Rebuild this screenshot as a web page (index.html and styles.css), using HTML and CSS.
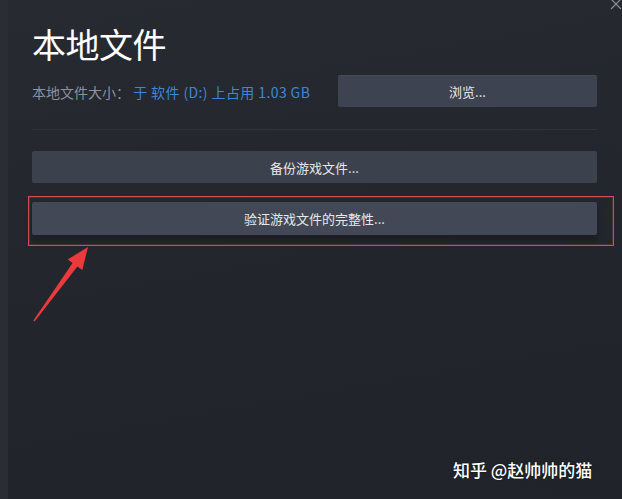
FILE: index.html
```html
<!DOCTYPE html>
<html lang="zh-CN">
<head>
    <meta charset="UTF-8">
    <meta name="viewport" content="width=device-width, initial-scale=1.0">
    <title>本地文件</title>
    <link rel="stylesheet" href="styles.css">
</head>
<body>
    <div class="panel">
        <div class="edge"></div>
        <div class="content">
            <h1 class="title">本地文件</h1>
            <div class="size-row">
                <div class="size-text">
                    <span class="label">本地文件大小：</span>
                    <span class="value">于 软件 (D:) 上占用 1.03 GB</span>
                </div>
                <button class="btn btn-browse">浏览...</button>
            </div>
            <div class="divider"></div>
            <button class="btn btn-wide">备份游戏文件...</button>
            <div class="highlight">
                <button class="btn btn-wide btn-verify">验证游戏文件的完整性...</button>
            </div>
        </div>

        <svg class="close" width="12" height="12" viewBox="0 0 12 12">
            <path d="M1 -1 L11 9 M1 9 L11 -1" stroke="#8a8d93" stroke-width="1.2" fill="none"/>
        </svg>

        <svg class="arrow" width="622" height="499" viewBox="0 0 622 499">
            <polygon points="88,247 82.3,270.1 77.4,266.6 34.6,321.5 33.4,320.5 72.6,263 67.7,259.5" fill="#ec3a3c"/>
        </svg>

        <div class="watermark">知乎 @赵帅帅的猫</div>
    </div>
</body>
</html>
```

FILE: styles.css
```css
* {
    box-sizing: border-box;
}

body {
    margin: 0;
    padding: 0;
    width: 622px;
    height: 499px;
    overflow: hidden;
    background: #23262d;
    font-family: "Noto Sans CJK SC", "Noto Sans", sans-serif;
}

.panel {
    position: relative;
    display: flex;
    width: 622px;
    height: 499px;
    background: linear-gradient(170deg, #272a31 0%, #23262d 45%, #202329 100%);
}

.edge {
    width: 8px;
    flex-shrink: 0;
    background: #2a2d33;
}

.content {
    flex: 1;
    min-width: 0;
    padding: 27px 25px 0 24px;
    display: flex;
    flex-direction: column;
}

.title {
    margin: 0;
    font-size: 34px;
    line-height: 34px;
    font-weight: 400;
    color: #ffffff;
    letter-spacing: -0.5px;
}

.size-row {
    display: flex;
    align-items: center;
    justify-content: space-between;
    margin-top: 14px;
    height: 32px;
}

.size-text {
    font-size: 14px;
    line-height: 18px;
    padding-top: 1px;
}

.label {
    color: #8d9199;
}

.value {
    color: #3f86d8;
    letter-spacing: 0.4px;
}

.btn {
    display: block;
    border: none;
    border-radius: 2px;
    background: #3d4350;
    color: #e8e8e8;
    font-family: "Noto Sans CJK SC", "Noto Sans", sans-serif;
    font-size: 13px;
    padding: 0;
    cursor: pointer;
}

.btn-browse {
    width: 259px;
    height: 32px;
    border-top: 1px solid #454b58;
}

.divider {
    height: 1px;
    margin-top: 22px;
    background: #2f333b;
}

.btn-wide {
    width: 100%;
    height: 32px;
    margin-top: 21px;
    background: #3b414d;
}

.highlight {
    margin: 13px -17px 0 -4px;
    padding: 5px 16px 10px 3px;
    border: 1px solid #d64a58;
    box-shadow: inset 0 0 0 1px rgba(214, 74, 88, 0.25);
}

.btn-verify {
    margin-top: 0;
    height: 33px;
    background: #424855;
    box-shadow: 0 6px 6px rgba(0, 0, 0, 0.22);
}

.close {
    position: absolute;
    top: 0;
    right: 0;
}

.arrow {
    position: absolute;
    top: 0;
    left: 0;
    pointer-events: none;
}

.watermark {
    position: absolute;
    left: 453px;
    top: 458px;
    font-size: 17px;
    line-height: 24px;
    color: #ffffff;
    font-weight: 500;
    text-shadow: 0 0 2px rgba(0, 0, 0, 0.5);
}
```
